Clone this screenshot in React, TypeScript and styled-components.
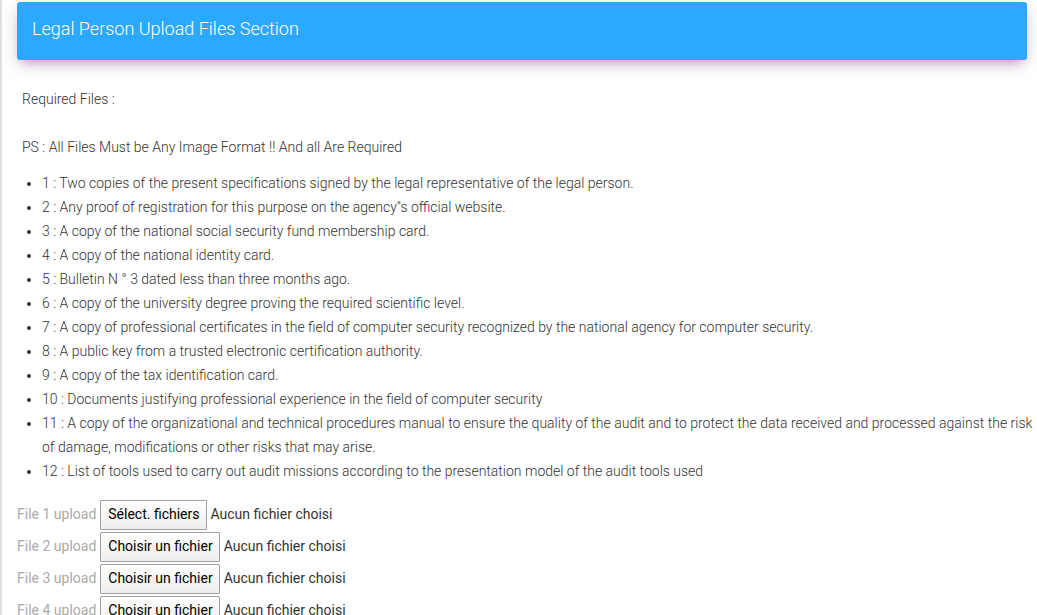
import React, { useRef, useState } from 'react';
import styled, { createGlobalStyle } from 'styled-components';

const GlobalStyle = createGlobalStyle`
  *, *::before, *::after { box-sizing: border-box; }
  body {
    margin: 0;
    background: #fff;
    color: #333;
    font-family: Roboto, "Liberation Sans", sans-serif;
    font-size: 14px;
    font-weight: 300;
    line-height: 24px;
  }
`;

const Page = styled.main`
  min-height: 100vh;
  border-left: 2px solid #e1e1e1;
  padding: 2px 0 8px 15px;
`;

const Header = styled.header`
  margin-right: 10px;
  padding: 15px 15px 19px;
  border-radius: 3px;
  background: #2ca8ff;
  box-shadow: 0 4px 20px 0 rgba(0, 0, 0, 0.14), 0 7px 10px -5px rgba(156, 39, 176, 0.4);
`;

const Title = styled.h4`
  margin: 0;
  color: #fff;
  font-size: 18px;
  font-weight: 300;
  line-height: 24px;
`;

const Requirements = styled.section`
  padding: 27px 0 0 5px;
`;

const Paragraph = styled.p<{ $gap: number }>`
  margin: 0 0 ${({ $gap }) => $gap}px;
`;

const List = styled.ul`
  margin: 0;
  padding-left: 20px;
`;

const Form = styled.form`
  display: flex;
  flex-direction: column;
  gap: 2px;
  margin-top: 17px;
`;

const FileRow = styled.div`
  display: flex;
  align-items: flex-start;
  gap: 4px;
  font-weight: 400;
  line-height: 28px;
`;

const FileLabel = styled.label`
  color: #aaa;
`;

const FileButton = styled.button`
  height: 30px;
  padding: 0 6px 2px 7px;
  border: 1px solid #a0a0a0;
  border-radius: 1px;
  background: linear-gradient(#fff, #eee);
  color: #000;
  font: inherit;
  line-height: 26px;
`;

const FileStatus = styled.output`
  color: #333;
`;

const requirements = [
  'Two copies of the present specifications signed by the legal representative of the legal person.',
  "Any proof of registration for this purpose on the agency''s official website.",
  'A copy of the national social security fund membership card.',
  'A copy of the national identity card.',
  'Bulletin N ° 3 dated less than three months ago.',
  'A copy of the university degree proving the required scientific level.',
  'A copy of professional certificates in the field of computer security recognized by the national agency for computer security.',
  'A public key from a trusted electronic certification authority.',
  'A copy of the tax identification card.',
  'Documents justifying professional experience in the field of computer security',
  'A copy of the organizational and technical procedures manual to ensure the quality of the audit and to protect the data received and processed against the risk of damage, modifications or other risks that may arise.',
  'List of tools used to carry out audit missions according to the presentation model of the audit tools used',
];

function FilePicker({ index, multiple = false }: { index: number; multiple?: boolean }) {
  const input = useRef<HTMLInputElement>(null);
  const [names, setNames] = useState('');
  const id = `file-${index}`;

  return (
    <FileRow>
      <FileLabel htmlFor={id}>File {index} upload</FileLabel>
      <FileButton id={id} type="button" onClick={() => input.current?.click()}>
        {multiple ? 'Sélect. fichiers' : 'Choisir un fichier'}
      </FileButton>
      <input
        ref={input}
        type="file"
        accept="image/*"
        multiple={multiple}
        hidden
        onChange={(e) => setNames(Array.from(e.target.files ?? []).map((f) => f.name).join(', '))}
      />
      <FileStatus htmlFor={id}>{names || 'Aucun fichier choisi'}</FileStatus>
    </FileRow>
  );
}

export default function App() {
  return (
    <>
      <GlobalStyle />
      <Page>
        <Header>
          <Title>Legal Person Upload Files Section</Title>
        </Header>
        <Requirements>
          <Paragraph $gap={24}>Required Files :</Paragraph>
          <Paragraph $gap={12}>PS : All Files Must be Any Image Format !! And all Are Required</Paragraph>
          <List>
            {requirements.map((text, i) => (
              <li key={text}>{`${i + 1} : ${text}`}</li>
            ))}
          </List>
        </Requirements>
        <Form>
          <FilePicker index={1} multiple />
          <FilePicker index={2} />
          <FilePicker index={3} />
          <FilePicker index={4} />
        </Form>
      </Page>
    </>
  );
}
